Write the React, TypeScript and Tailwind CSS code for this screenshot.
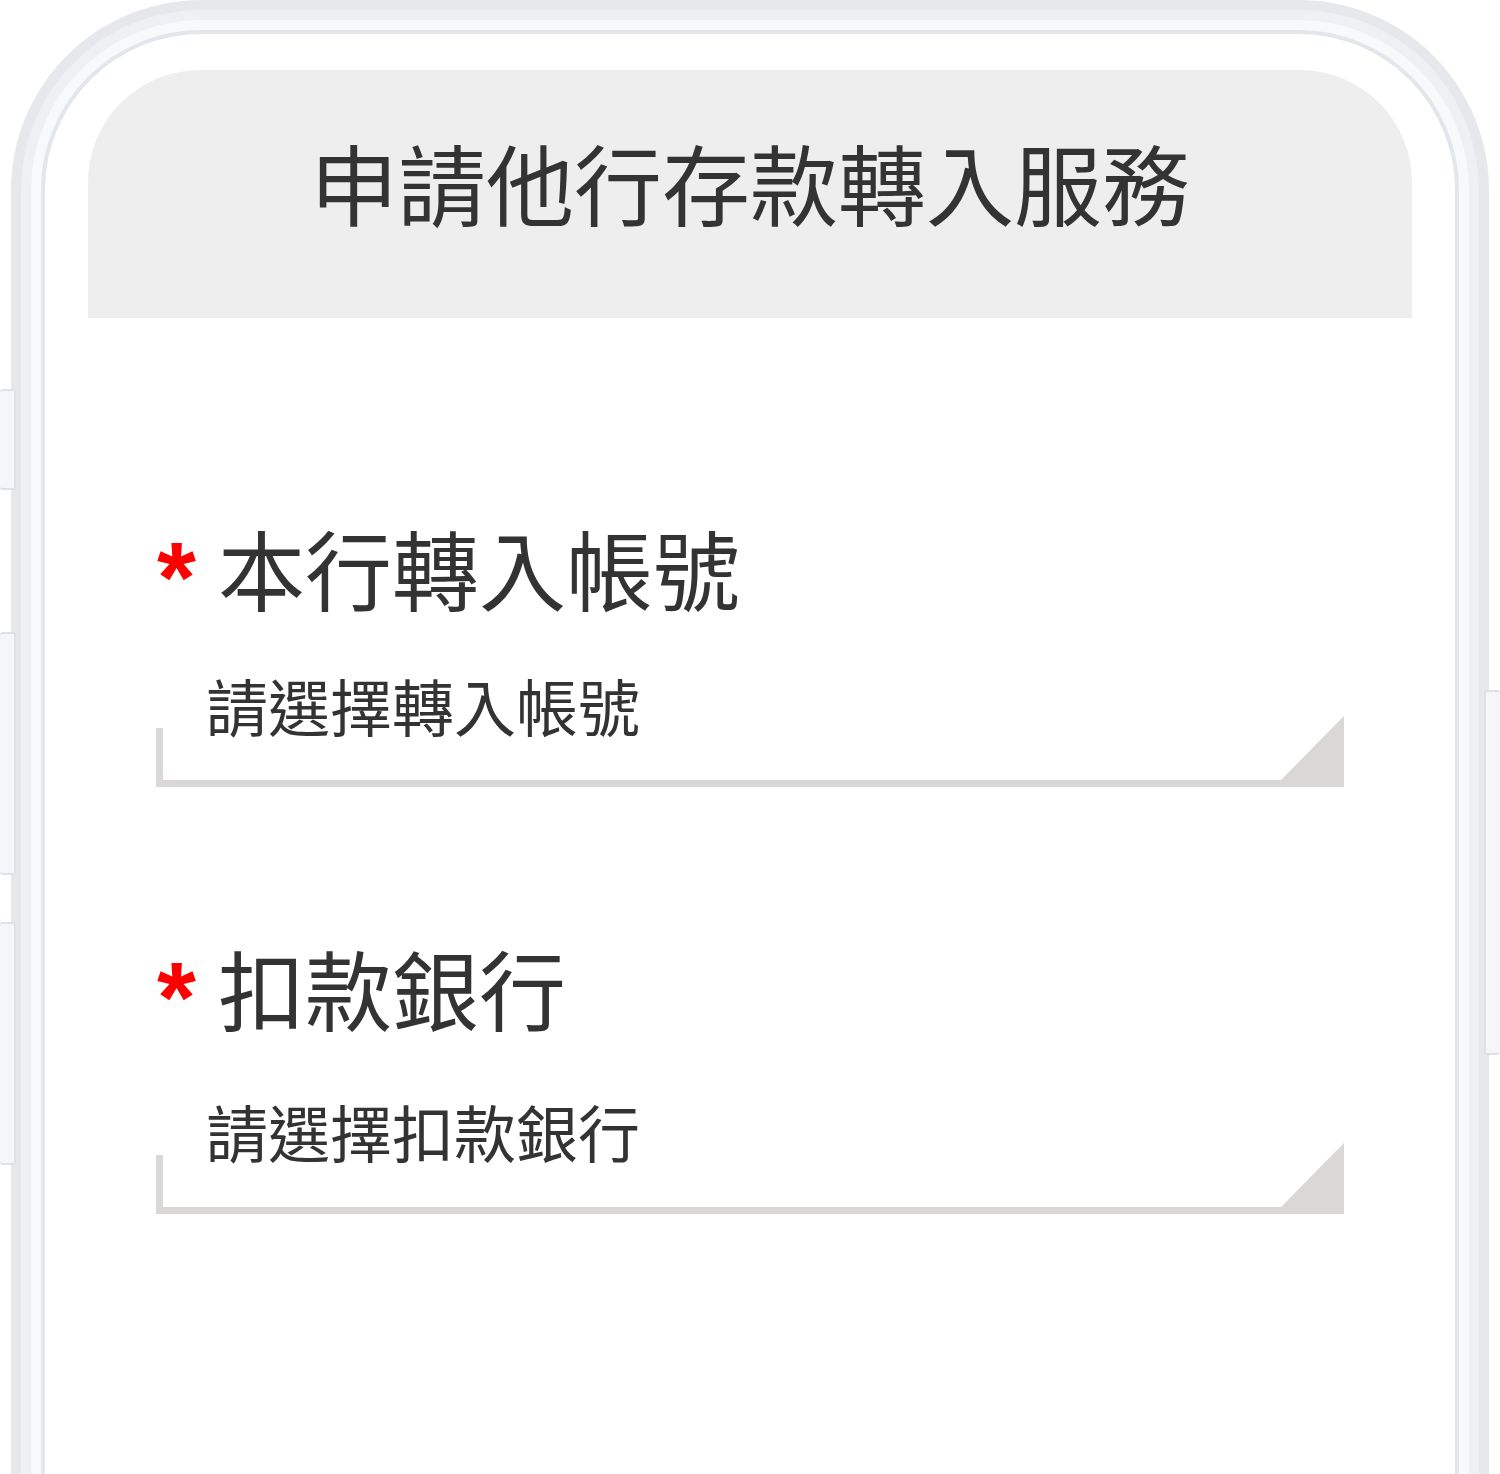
const cjk = "font-['Noto_Sans_CJK_TC','Noto_Sans_CJK_SC',sans-serif]";

function SideKey({ className }: { className: string }) {
  return (
    <div
      className={`absolute z-10 w-[16px] rounded-[3px] border-2 border-l-0 border-[#dfe1e6] bg-[#f5f6fa] ${className}`}
    />
  );
}

function Field({
  label,
  placeholder,
  labelTop,
  placeholderTop,
  boxPull,
}: {
  label: string;
  placeholder: string;
  labelTop: string;
  placeholderTop: string;
  boxPull: string;
}) {
  return (
    <div>
      <div className={`flex h-[87px] items-start ${labelTop}`}>
        <span className="w-[62px] pl-[1px] pt-[3px] font-['Liberation_Sans',sans-serif] text-[100px] font-bold leading-none text-[#ff0000]">
          *
        </span>
        <span className="text-[87px] leading-none text-[#333333]">{label}</span>
      </div>
      <div className={`pl-[50px] text-[62px] leading-none text-[#333333] ${placeholderTop}`}>{placeholder}</div>
      <div className={`relative ${boxPull}`}>
        <div className="h-[59px] border-b-[7px] border-l-[7px] border-[#d9d8d6]" />
        <svg className="absolute bottom-0 right-0" width="63" height="71" viewBox="0 0 63 71">
          <polygon points="63,0 63,71 0,71 0,64" fill="#d9d8d6" />
        </svg>
      </div>
    </div>
  );
}

export default function App() {
  return (
    <div className={`relative h-[1474px] w-[1500px] overflow-hidden bg-white ${cjk}`}>
      <SideKey className="left-0 top-[389px] h-[101px]" />
      <SideKey className="left-0 top-[632px] h-[243px]" />
      <SideKey className="left-0 top-[922px] h-[243px]" />
      <div className="absolute right-0 top-[690px] z-10 h-[365px] w-[16px] rounded-[3px] border-2 border-r-0 border-[#dfe1e6] bg-[#f5f6fa]" />

      <div className="px-[11px]">
        <div className="rounded-t-[190px] bg-[#e7e8ec] px-[10px] pt-[10px]">
          <div className="rounded-t-[180px] bg-[#eff0f3] px-[10px] pt-[10px]">
            <div className="rounded-t-[170px] bg-[#f8f9fb] px-[10px] pt-[10px]">
              <div className="h-[1444px] rounded-t-[160px] border-4 border-b-0 border-[#e3e6ea] bg-white">
                <div className="mx-[43px] mt-[36px] flex h-[248px] items-center justify-center rounded-t-[112px] bg-[#eeeeee] pb-[26px]">
                  <h1 className="text-[88px] font-normal leading-none text-[#333333]">申請他行存款轉入服務</h1>
                </div>
                <div className="px-[111px]">
                  <Field
                    label="本行轉入帳號"
                    placeholder="請選擇轉入帳號"
                    labelTop="mt-[206px]"
                    placeholderTop="mt-[63px]"
                    boxPull="-mt-[8px]"
                  />
                  <Field
                    label="扣款銀行"
                    placeholder="請選擇扣款銀行"
                    labelTop="mt-[157px]"
                    placeholderTop="mt-[69px]"
                    boxPull="-mt-[7px]"
                  />
                </div>
              </div>
            </div>
          </div>
        </div>
      </div>
    </div>
  );
}
